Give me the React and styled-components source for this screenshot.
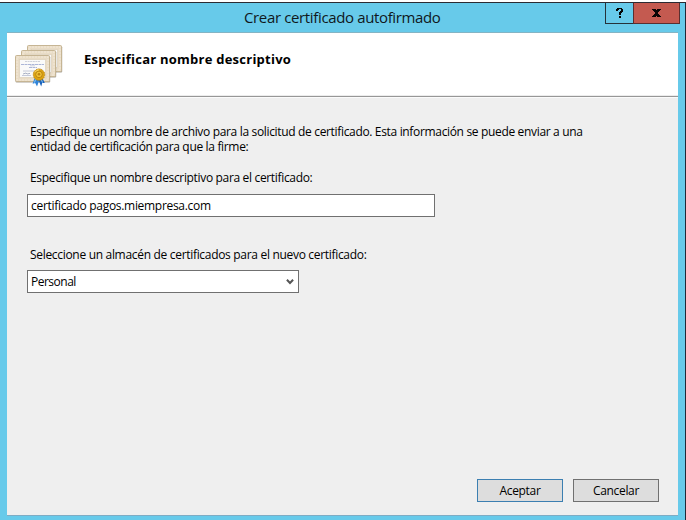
import React from 'react';
import styled, { createGlobalStyle } from 'styled-components';

const GlobalStyle = createGlobalStyle`
  * { box-sizing: border-box; }
  body { margin: 0; background: #fff; overflow: hidden; }
`;

const Window = styled.div`
  width: 686px;
  height: 518px;
  margin-top: 2px;
  padding: 0 7px 0 7px;
  display: flex;
  flex-direction: column;
  background: #67caea;
  border-top: 1px solid #2b2b33;
  border-right: 1px solid #1f2a38;
  font-family: 'Open Sans', 'Noto Sans', sans-serif;
  font-size: 12px;
  color: #000;
`;

const TitleBar = styled.header`
  display: flex;
  height: 29px;
  flex: none;
`;

const Title = styled.h1`
  flex: 1;
  margin: 0;
  padding-left: 237px;
  font-size: 15px;
  font-weight: 400;
  line-height: 28px;
  letter-spacing: -0.36px;
  white-space: nowrap;
  color: #10181c;
`;

const CaptionButton = styled.button`
  width: ${(p) => (p.$close ? 47 : 28)}px;
  height: 21px;
  padding: 0;
  display: flex;
  align-items: center;
  justify-content: center;
  border: 1px solid ${(p) => (p.$close ? '#5a2f30' : '#25323a')};
  border-top: 0;
  border-right-width: ${(p) => (p.$close ? 1 : 0)}px;
  background: ${(p) => (p.$close ? '#c45a50' : '#67caea')};
  &:last-child { margin-right: -2px; }
`;

const Dialog = styled.main`
  flex: 1;
  margin-bottom: 4px;
  display: flex;
  flex-direction: column;
  background: #efefef;
  border-top: 1px solid #84b4c4;
  border-bottom: 1px solid #7eacc4;
`;

const Banner = styled.div`
  height: 65px;
  display: flex;
  background: #fff;
  border-bottom: 1px solid #fbfbfb;
  box-shadow: inset 0 -1px 0 #979797, inset 0 -2px 0 #ececec;
`;

const BannerIcon = styled.div`
  padding: 10px 0 0 7px;
  width: 77px;
`;

const Heading = styled.h2`
  margin: 0;
  font-size: 13px;
  font-weight: 700;
  line-height: 52px;
  letter-spacing: 0.24px;
`;

const Form = styled.div`
  flex: 1;
  padding: 26px 20px 0;
  display: flex;
  flex-direction: column;
  align-items: flex-start;
`;

const Intro = styled.p`
  width: 570px;
  margin: 0 0 16px 3px;
  line-height: 15px;
  letter-spacing: -0.335px;
`;

const Label = styled.label`
  height: 15px;
  line-height: 15px;
  margin: 0 0 ${(p) => p.$gap}px 3px;
  letter-spacing: ${(p) => p.$track}px;
  white-space: nowrap;
`;

const Field = styled.div`
  width: ${(p) => p.$width}px;
  height: 23px;
  padding: 0 4px 0 3px;
  display: flex;
  align-items: center;
  justify-content: space-between;
  border: 1px solid #707070;
  background: #fff;
  margin-bottom: ${(p) => p.$gap || 0}px;
`;

const Value = styled.span`
  line-height: 15px;
  letter-spacing: ${(p) => p.$track}px;
  white-space: nowrap;
`;

const Actions = styled.footer`
  display: flex;
  justify-content: flex-end;
  gap: 10px;
  padding: 0 19px 13px 0;
`;

const Button = styled.button`
  width: 86px;
  height: 23px;
  padding: 0;
  border: 1px solid ${(p) => (p.$primary ? '#3c7fb1' : '#707070')};
  background: #dddddd;
  font: inherit;
  color: #000;
  letter-spacing: -0.33px;
  line-height: 21px;
`;

const HelpGlyph = () => (
  <svg width="7" height="10" viewBox="0 0 7 10" shapeRendering="crispEdges">
    <path d="M1 0h5v1h1v3h-1v1h-1v2h-2v-3h1v-1h1v-2h-2v1h-1v1h-2v-2h1zM3 8h2v2h-2z" fill="#050505" />
  </svg>
);

const CloseGlyph = () => (
  <svg width="9" height="8" viewBox="0 0 9 8" shapeRendering="crispEdges">
    <path d="M0 0h4v1h1v-1h4v1h-1v1h-1v1h-1v2h1v1h1v1h1v1h-4v-1h-1v1h-4v-1h1v-1h1v-1h1v-2h-1v-1h-1v-1h-1z" fill="#0b0505" />
  </svg>
);

const Chevron = () => (
  <svg width="8" height="6" viewBox="0 0 8 6">
    <path d="M0.9 0.8L4 4L7.1 0.8" fill="none" stroke="#555" strokeWidth="2" />
  </svg>
);

const Sheet = ({ x, y }) => (
  <g transform={`translate(${x} ${y})`}>
    <rect x="0.6" y="1.2" width="34.6" height="26.2" rx="1" fill="#8d8778" opacity="0.75" />
    <rect x="0.5" y="0.5" width="34" height="26" rx="1" fill="#e9dcc6" stroke="#c6b594" />
    <rect x="2" y="2" width="31" height="23" fill="none" stroke="#f3e9d8" strokeDasharray="2 1" />
    <rect x="4.5" y="4.5" width="26" height="18" fill="#fafaf9" stroke="#ddd0b9" strokeWidth="0.7" />
  </g>
);

const CertificateIcon = () => (
  <svg width="50" height="44" viewBox="14 43 50 44">
    <Sheet x={27} y={45} />
    <Sheet x={21} y={50} />
    <Sheet x={15} y={55} />
    <path d="M25 61.5h15" stroke="#c3c7d2" strokeDasharray="2 0.6" strokeWidth="0.8" />
    <path d="M21 64.5h23M29 67.5h8" stroke="#a3aed2" strokeDasharray="3 0.5" strokeWidth="0.9" />
    <path d="M30 65.8h5" stroke="#b8c0da" strokeWidth="0.7" />
    <path d="M23 71h11M22 75.5h9" stroke="#b7bdd0" strokeWidth="0.8" />
    <path d="M23 74l3-1 1 1 3-0.6" fill="none" stroke="#8791ad" strokeWidth="0.7" />
    <path d="M35 77l-2.4 6.8 2.6-0.8 1.8 3.4L39.4 80z" fill="#2f83d8" />
    <path d="M42 77l2.8 6-2.6 0-1 3.4L38.4 80z" fill="#1b63bc" />
    <path d="M35.8 79l-1.3 3.6M41.5 80l1 2.6" stroke="#8fc8f3" />
    <circle cx="39" cy="74.6" r="5.7" fill="#dca312" stroke="#bd850d" strokeWidth="0.9" strokeDasharray="1.6 0.7" />
    <circle cx="39" cy="74.4" r="3.3" fill="#efc035" stroke="#b07a0a" strokeWidth="0.8" />
    <circle cx="39" cy="74.3" r="1.3" fill="#bd830e" />
    <path d="M35 72.4q1.2-2.4 4-2.6" fill="none" stroke="#fbe27a" strokeWidth="0.9" />
  </svg>
);

export default function App() {
  return (
    <>
      <GlobalStyle />
      <Window>
        <TitleBar>
          <Title>Crear certificado autofirmado</Title>
          <CaptionButton aria-label="Ayuda"><HelpGlyph /></CaptionButton>
          <CaptionButton $close aria-label="Cerrar"><CloseGlyph /></CaptionButton>
        </TitleBar>
        <Dialog>
          <Banner>
            <BannerIcon><CertificateIcon /></BannerIcon>
            <Heading>Especificar nombre descriptivo</Heading>
          </Banner>
          <Form>
            <Intro>
              Especifique un nombre de archivo para la solicitud de certificado. Esta información se puede enviar a una
              entidad de certificación para que la firme:
            </Intro>
            <Label $gap={9} $track={-0.335}>Especifique un nombre descriptivo para el certificado:</Label>
            <Field $width={408} $gap={30}>
              <Value $track={-0.3}>certificado pagos.miempresa.com</Value>
            </Field>
            <Label $gap={8} $track={-0.31}>Seleccione un almacén de certificados para el nuevo certificado:</Label>
            <Field $width={272}>
              <Value $track={-0.5}>Personal</Value>
              <Chevron />
            </Field>
          </Form>
          <Actions>
            <Button $primary>Aceptar</Button>
            <Button>Cancelar</Button>
          </Actions>
        </Dialog>
      </Window>
    </>
  );
}
